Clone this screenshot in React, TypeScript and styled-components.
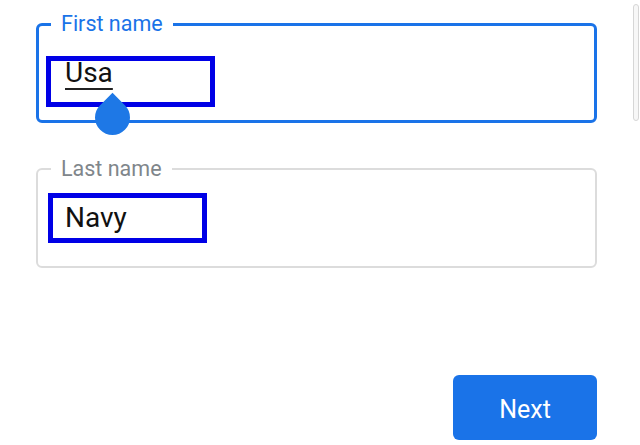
import React from 'react'
import styled, { createGlobalStyle } from 'styled-components'

const GlobalStyle = createGlobalStyle`
  html, body {
    margin: 0;
    padding: 0;
    background: #ffffff;
  }
  body {
    font-family: Roboto, "Noto Sans", "Liberation Sans", sans-serif;
    color: #111111;
  }
`

const BLUE = '#1a73e8'

const Page = styled.div`
  position: relative;
  width: 640px;
  height: 445px;
  overflow: hidden;
  box-sizing: border-box;
  padding: 12px 43px 0 36px;
  display: flex;
  flex-direction: column;
`

const Field = styled.fieldset<{ $active?: boolean }>`
  position: relative;
  margin: 0;
  padding: 0;
  height: 111px;
  box-sizing: border-box;
  min-width: 0;
  border: ${p => (p.$active ? `3px solid ${BLUE}` : '2px solid #dcdcdc')};
  border-radius: 6px;
  & + & {
    margin-top: 34px;
  }
`

const Legend = styled.legend<{ $active?: boolean }>`
  margin-left: ${p => (p.$active ? '12px' : '13px')};
  padding: 0 10px;
  font-size: 21.5px;
  line-height: 24px;
  color: ${p => (p.$active ? BLUE : '#80868b')};
`

// the blue annotation frame round each typed value
const Highlight = styled.div<{ $width: number; $height: number; $top: number; $left: number; $lh: number; $pad: number }>`
  box-sizing: border-box;
  width: ${p => p.$width}px;
  height: ${p => p.$height}px;
  margin: ${p => p.$top}px 0 0 ${p => p.$left}px;
  border: 5px solid #0000e6;
  padding-left: ${p => p.$pad}px;
  font-size: 28px;
  line-height: ${p => p.$lh}px;
  white-space: nowrap;
`

const Composing = styled.span`
  text-decoration: underline;
  text-decoration-thickness: 1.5px;
  text-underline-offset: 6px;
  text-decoration-color: #222;
`

const Handle = styled.div`
  position: absolute;
  left: 56px;
  top: 64px;
  width: 35px;
  height: 35px;
  background: #1e78e6;
  border-radius: 0 50% 50% 50%;
  transform: rotate(45deg);
`

const Footer = styled.div`
  display: flex;
  justify-content: flex-end;
  margin-top: 107px;
`

const NextButton = styled.button`
  width: 144px;
  height: 65px;
  padding: 3px 0 0;
  border: none;
  border-radius: 6px;
  background: ${BLUE};
  color: #ffffff;
  font-family: Roboto, "Noto Sans", "Liberation Sans", sans-serif;
  font-size: 25px;
  cursor: pointer;
`

const ScrollThumb = styled.div`
  position: absolute;
  right: 1px;
  top: 4px;
  width: 6px;
  height: 117px;
  box-sizing: border-box;
  border: 1px solid #d6d6d6;
  border-radius: 4px;
  background: #f7f7f7;
`

export default function App() {
  return (
    <>
      <GlobalStyle />
      <Page>
        <Field $active>
          <Legend $active>First name</Legend>
          <Highlight $width={169} $height={51} $top={20} $left={7} $lh={24} $pad={14}>
            <Composing>Usa</Composing>
          </Highlight>
          <Handle />
        </Field>
        <Field>
          <Legend>Last name</Legend>
          <Highlight $width={159} $height={50} $top={12} $left={10} $lh={40} $pad={12}>
            Navy
          </Highlight>
        </Field>
        <Footer>
          <NextButton>Next</NextButton>
        </Footer>
        <ScrollThumb />
      </Page>
    </>
  )
}
